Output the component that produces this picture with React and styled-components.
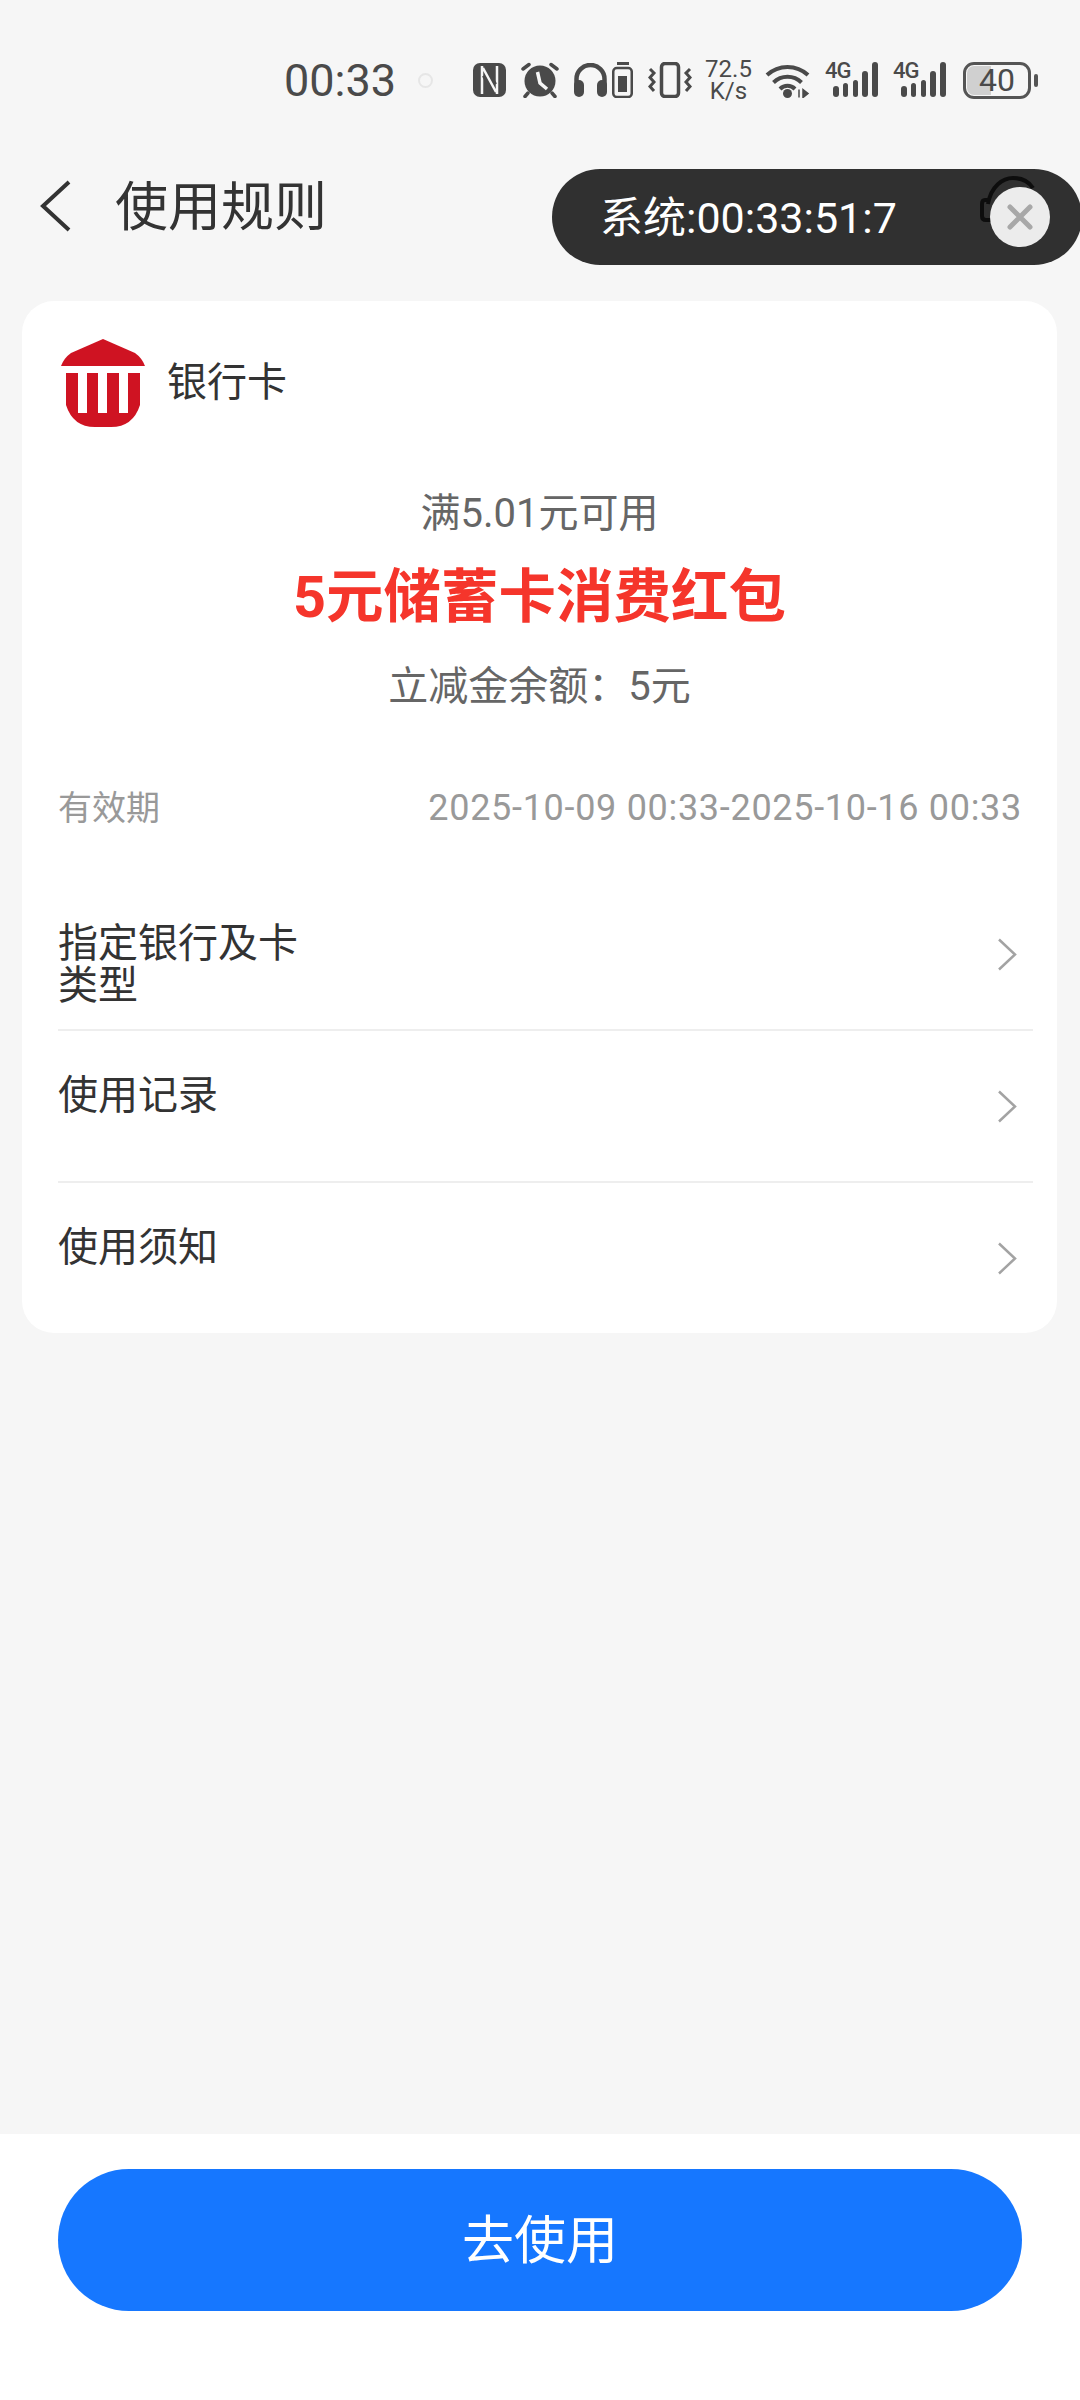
import React from "react";
import styled, { createGlobalStyle } from "styled-components";

const GlobalStyle = createGlobalStyle`
  html, body {
    margin: 0;
    padding: 0;
    background: #f6f6f6;
    font-family: Roboto, "Noto Sans CJK SC", sans-serif;
  }
  * { box-sizing: border-box; }
`;

const NfcIcon = () => (
  <svg width="33" height="34" viewBox="0 0 33 34">
    <rect width="33" height="34" rx="7" fill="#4a4a4a" />
    <path d="M9 3v28M24 3v28M10 5l13 24" stroke="#f6f6f6" strokeWidth="2.500" fill="none" />
    <path d="M15 7l8 14M10 13l8 14" stroke="#4a4a4a" strokeWidth="2" fill="none" />
  </svg>
);

const AlarmIcon = () => (
  <svg width="38" height="36" viewBox="0 0 38 36">
    <circle cx="19" cy="19" r="15.500" fill="#4a4a4a" />
    <path d="M16.500 10l2.500 11 7 6" stroke="#f6f6f6" strokeWidth="3.500" fill="none" />
    <path d="M2 7l6-4.500M36 7l-6-4.500M7 31l-3 3.500M31 31l3 3.500" stroke="#4a4a4a" strokeWidth="3.500" strokeLinecap="round" fill="none" />
  </svg>
);

const HeadphonesIcon = () => (
  <svg width="33" height="34" viewBox="0 0 33 34">
    <path d="M2.500 24V16a14 14 0 0 1 28 0v8" stroke="#4a4a4a" strokeWidth="4.500" fill="none" />
    <rect x="0" y="17" width="10" height="17" rx="5" fill="#4a4a4a" />
    <rect x="23" y="17" width="10" height="17" rx="5" fill="#4a4a4a" />
  </svg>
);

const SmallBatteryIcon = () => (
  <svg width="21" height="36" viewBox="0 0 21 36">
    <rect x="5" y="0" width="12" height="3" fill="#4a4a4a" />
    <rect x="1.250" y="6" width="18.500" height="29" rx="3.500" stroke="#4a4a4a" strokeWidth="2.500" fill="none" />
    <rect x="6" y="14" width="9" height="16" fill="#4a4a4a" />
  </svg>
);

const VibrateIcon = () => (
  <svg width="44" height="36" viewBox="0 0 44 36">
    <rect x="13.500" y="1.500" width="17" height="33" rx="3.500" stroke="#4a4a4a" strokeWidth="3.500" fill="none" />
    <path d="M2 7l4 4-4 4.500 4 4.500-4 4.500 4 4.500M42 7l-4 4 4 4.500-4 4.500 4 4.500-4 4.500" stroke="#4a4a4a" strokeWidth="3" fill="none" />
  </svg>
);

const WifiIcon = () => (
  <svg width="45" height="36" viewBox="0 0 45 36">
    <path d="M2 13a30 30 0 0 1 41 0M8.500 20.500a20 20 0 0 1 28 0M15 27a10.500 10.500 0 0 1 15 0" stroke="#4a4a4a" strokeWidth="4" fill="none" />
    <circle cx="22.500" cy="31.500" r="4.500" fill="#4a4a4a" />
    <path d="M34 27.500v8M38 27.500l5 4-5 4z" stroke="#4a4a4a" strokeWidth="1.500" fill="#4a4a4a" />
  </svg>
);

const BarsIcon = () => (
  <svg width="45" height="36" viewBox="0 0 45 36">
    <rect x="0" y="24" width="6" height="11" rx="3" fill="#4a4a4a" />
    <rect x="10" y="21" width="5" height="14" rx="2.500" fill="#4a4a4a" />
    <rect x="20" y="18" width="5" height="17" rx="2.500" fill="#4a4a4a" />
    <rect x="29" y="9" width="6" height="26" rx="3" fill="#4a4a4a" />
    <rect x="39" y="0" width="6" height="35" rx="3" fill="#4a4a4a" />
  </svg>
);

const BankLogo = () => (
  <svg width="84" height="88" viewBox="0 0 84 88">
    <path d="M42 0L74 14Q81 19 84 27H0Q3 19 10 14Z" fill="#cf1322" />
    <path d="M5 34H17V74H26V34H37V74H46V34H58V74H67V34H79V66Q72 88 50 88H34Q12 88 5 66Z" fill="#cf1322" />
  </svg>
);

const BackIcon = () => (
  <svg width="32" height="52" viewBox="0 0 32 52">
    <path d="M29 2L3 26L29 50" stroke="#333" strokeWidth="4" fill="none" />
  </svg>
);

const Chevron = () => (
  <ChevronMark width="20" height="33" viewBox="0 0 20 33">
    <path d="M2 1.500L18 16.500L2 31.500" stroke="#a3a3a3" strokeWidth="2.500" fill="none" />
  </ChevronMark>
);

const rows = [
  { label: "指定银行及卡类型" },
  { label: "使用记录" },
  { label: "使用须知", last: true },
];

export default function App() {
  return (
    <Page>
      <GlobalStyle />
      <StatusBar>
        <Clock>00:33</Clock>
        <FaintDot />
        <Icons>
          <NfcIcon />
          <AlarmIcon />
          <HeadGroup>
            <HeadphonesIcon />
            <SmallBatteryIcon />
          </HeadGroup>
          <VibrateIcon />
          <Speed>
            <span>72.5</span>
            <span>K/s</span>
          </Speed>
          <WifiIcon />
          <Signal>
            <SignalLabel>4G</SignalLabel>
            <BarsIcon />
          </Signal>
          <Signal>
            <SignalLabel>4G</SignalLabel>
            <BarsIcon />
          </Signal>
          <Battery>
            <BatteryFill />
            <BatteryText>40</BatteryText>
            <BatteryNub />
          </Battery>
        </Icons>
      </StatusBar>

      <Header>
        <BackIcon />
        <Title>使用规则</Title>
      </Header>

      <TimerPill>
        <TimerText>系统:00:33:51:7</TimerText>
        <HeadsetGhost width="60" height="50" viewBox="0 0 60 50">
          <path d="M9 30C12 12 24 4 34 4C44 4 50 8 54 14" stroke="#0d0d0d" strokeWidth="4" fill="none" />
          <path d="M10 26H6Q3 26 3 30V42Q3 46 7 46H12" stroke="#0d0d0d" strokeWidth="4" fill="none" />
        </HeadsetGhost>
        <CloseButton>
          <svg width="26" height="26" viewBox="0 0 26 26">
            <path d="M3 3L23 23M23 3L3 23" stroke="#a8a8a8" strokeWidth="5" strokeLinecap="round" fill="none" />
          </svg>
        </CloseButton>
      </TimerPill>

      <Card>
        <CardHead>
          <BankLogo />
          <CardName>银行卡</CardName>
        </CardHead>
        <Condition>满5.01元可用</Condition>
        <CouponName>5元储蓄卡消费红包</CouponName>
        <Balance>立减金余额：5元</Balance>
        <Validity>
          <ValidityLabel>有效期</ValidityLabel>
          <ValidityValue>2025-10-09 00:33-2025-10-16 00:33</ValidityValue>
        </Validity>
        <RowList>
          {rows.map((row) => (
            <Row key={row.label} $last={row.last}>
              <RowLabel>{row.label}</RowLabel>
              <Chevron />
            </Row>
          ))}
        </RowList>
      </Card>

      <Footer>
        <UseButton>去使用</UseButton>
      </Footer>
    </Page>
  );
}

const Page = styled.div`
  position: relative;
  width: 1080px;
  height: 2400px;
  display: flex;
  flex-direction: column;
  background: #f6f6f6;
  overflow: hidden;
`;

const StatusBar = styled.div`
  height: 160px;
  padding: 60px 0 0 284px;
  display: flex;
  align-items: flex-start;
`;

const Clock = styled.div`
  width: 134px;
  margin-top: 1px;
  font-size: 45px;
  line-height: 40px;
  color: #4a4a4a;
`;

const FaintDot = styled.div`
  width: 15px;
  height: 15px;
  margin-top: 13px;
  border-radius: 50%;
  border: 2px solid #e6e6e6;
`;

const Icons = styled.div`
  margin: -2px 0 0 40px;
  display: flex;
  align-items: center;
  gap: 15px;
`;

const HeadGroup = styled.div`
  display: flex;
  align-items: center;
  gap: 5px;
`;

const Speed = styled.div`
  width: 43px;
  display: flex;
  flex-direction: column;
  align-items: center;
  font-size: 24px;
  line-height: 22px;
  color: #4a4a4a;
`;

const Signal = styled.div`
  position: relative;
  width: 53px;
  height: 36px;
  display: flex;
  justify-content: flex-end;
`;

const SignalLabel = styled.span`
  position: absolute;
  left: 0;
  top: 0;
  font-size: 22px;
  line-height: 18px;
  font-weight: 500;
  letter-spacing: -1px;
  color: #4a4a4a;
`;

const Battery = styled.div`
  position: relative;
  width: 68px;
  height: 37px;
  margin-left: 2px;
  border: 3px solid #555;
  border-radius: 11px;
  display: flex;
  align-items: center;
  justify-content: center;
`;

const BatteryFill = styled.div`
  position: absolute;
  left: 1px;
  top: 1px;
  bottom: 1px;
  width: 24px;
  border-radius: 7px 0 0 7px;
  background: #d0d0d0;
`;

const BatteryText = styled.span`
  position: relative;
  font-size: 32px;
  line-height: 32px;
  color: #4a4a4a;
`;

const BatteryNub = styled.div`
  position: absolute;
  right: -10px;
  top: 9px;
  width: 4px;
  height: 13px;
  border-radius: 2px;
  background: #555;
`;

const Header = styled.div`
  height: 141px;
  padding: 20px 0 0 40px;
  display: flex;
  align-items: flex-start;
  gap: 43px;
`;

const Title = styled.h1`
  margin: -2px 0 0;
  font-size: 53px;
  line-height: 60px;
  font-weight: 400;
  color: #333;
`;

const TimerPill = styled.div`
  position: absolute;
  left: 552px;
  top: 169px;
  width: 530px;
  height: 96px;
  padding: 0 0 6px 48px;
  display: flex;
  align-items: center;
  border-radius: 48px;
  background: #303030;
`;

const TimerText = styled.span`
  font-size: 43px;
  color: #fff;
`;

const HeadsetGhost = styled.svg`
  position: absolute;
  left: 427px;
  top: 5px;
`;

const CloseButton = styled.div`
  position: absolute;
  left: 438px;
  top: 18px;
  width: 60px;
  height: 60px;
  border-radius: 50%;
  background: #ececec;
  display: flex;
  align-items: center;
  justify-content: center;
`;

const Card = styled.section`
  width: 1035px;
  height: 1032px;
  margin-left: 22px;
  padding: 38px 0 0 36px;
  border-radius: 32px;
  background: #fff;
`;

const CardHead = styled.div`
  padding-left: 3px;
  display: flex;
  align-items: center;
  gap: 22px;
`;

const CardName = styled.span`
  margin-bottom: 8px;
  font-size: 40px;
  color: #333;
`;

const Condition = styled.div`
  margin: 62px 0 0 -36px;
  text-align: center;
  font-size: 40px;
  line-height: 50px;
  color: #666;
`;

const CouponName = styled.div`
  margin: 24px 0 0 -36px;
  text-align: center;
  font-size: 57.5px;
  line-height: 70px;
  font-weight: 700;
  color: #f5352b;
`;

const Balance = styled.div`
  margin: 29px 0 0 -36px;
  text-align: center;
  font-size: 40px;
  line-height: 50px;
  color: #666;
`;

const Validity = styled.div`
  margin: 71px 35px 0 0;
  display: flex;
  align-items: center;
  justify-content: space-between;
`;

const ValidityLabel = styled.span`
  font-size: 34px;
  line-height: 50px;
  color: #999;
`;

const ValidityValue = styled.span`
  font-size: 36px;
  line-height: 50px;
  letter-spacing: 0.7px;
  color: #999;
`;

const RowList = styled.div`
  margin: 46px 24px 0 0;
`;

const Row = styled.div`
  height: 152px;
  display: flex;
  align-items: flex-start;
  justify-content: space-between;
  padding: 44px 16px 0 0;
  border-bottom: ${(p) => (p.$last ? "none" : "2px solid #eee")};
`;

const RowLabel = styled.div`
  width: 250px;
  font-size: 40px;
  line-height: 42px;
  color: #333;
`;

const ChevronMark = styled.svg`
  margin-top: 15px;
`;

const Footer = styled.div`
  margin-top: auto;
  height: 266px;
  padding: 35px 58px 0;
  background: #fff;
`;

const UseButton = styled.button`
  width: 100%;
  height: 142px;
  padding: 0 0 8px;
  border: none;
  border-radius: 71px;
  background: #1677ff;
  color: #fff;
  font-family: inherit;
  font-size: 52px;
`;
